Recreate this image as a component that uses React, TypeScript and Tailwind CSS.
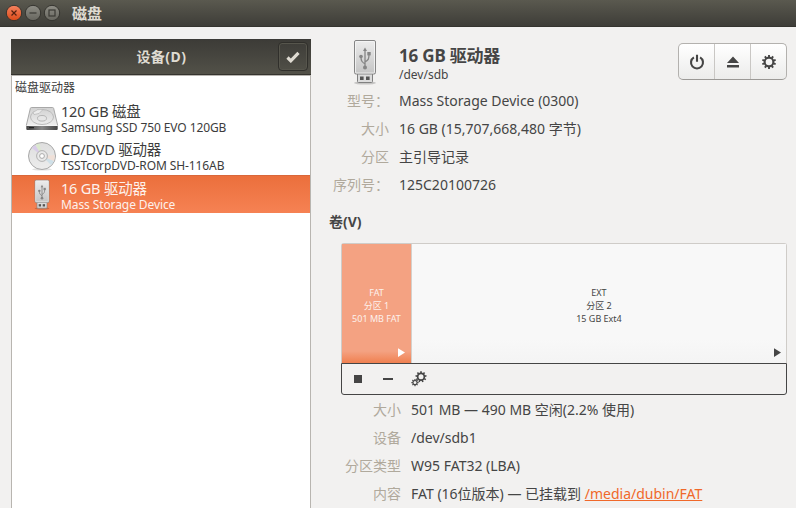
import React from "react";

const FONT = "font-['Noto_Sans','Noto_Sans_CJK_SC',sans-serif]";

function UsbIcon({ className }: { className: string }) {
  return (
    <svg viewBox="0 0 24 46" className={className} fill="none">
      <defs>
        <linearGradient id="usbBody" x1="0" y1="0" x2="0" y2="1">
          <stop offset="0" stopColor="#ececec" />
          <stop offset="1" stopColor="#c4c4c4" />
        </linearGradient>
      </defs>
      <ellipse cx="12" cy="44" rx="11" ry="1.6" fill="#000" opacity=".18" />
      <rect x="4.5" y="34" width="15" height="9.5" rx="1" fill="#dcdcdc" stroke="#808080" />
      <rect x="7" y="37.5" width="3.6" height="3.5" fill="#555" />
      <rect x="13" y="37.5" width="3.6" height="3.5" fill="#555" />
      <rect x="1.5" y="1.5" width="21" height="33.5" rx="1.5" fill="url(#usbBody)" stroke="#858585" />
      <rect x="2.5" y="2.5" width="19" height="31.5" rx="1" stroke="#f6f6f6" strokeOpacity=".8" />
      <g stroke="#858585" strokeWidth="1.3">
        <path d="M12 28V11M12 25C9 23 8 22 8 18M12 23C15.5 21 16 20 16 15" />
      </g>
      <path d="M12 8.5l2 3.5h-4z" fill="#858585" />
      <circle cx="12" cy="28.5" r="2" fill="#858585" />
      <circle cx="8" cy="17.5" r="1.8" fill="#858585" />
      <rect x="14.3" y="13" width="3.4" height="3.4" fill="#858585" />
    </svg>
  );
}

function DiskIcon() {
  return (
    <svg viewBox="0 0 34 26" className="h-[26px] w-[34px]" fill="none">
      <defs>
        <linearGradient id="diskTop" x1="0" y1="0" x2="0" y2="1">
          <stop offset="0" stopColor="#d2d2d2" />
          <stop offset="1" stopColor="#eeeeee" />
        </linearGradient>
        <linearGradient id="diskFront" x1="0" y1="0" x2="1" y2="0">
          <stop offset="0" stopColor="#444" />
          <stop offset=".5" stopColor="#888" />
          <stop offset="1" stopColor="#444" />
        </linearGradient>
      </defs>
      <path d="M1.3 20.5h31.4v3.6q0 .9-1 .9H2.3q-1 0-1-.9z" fill="url(#diskFront)" />
      <path d="M6.5 2.5h21q1 0 1.2 1l4 17H1.3l4-17q.2-1 1.2-1z" fill="url(#diskTop)" stroke="#a0a0a0" strokeWidth=".9" />
      <ellipse cx="17" cy="12" rx="11.5" ry="7.5" stroke="#b5b5b5" strokeWidth=".9" />
      <ellipse cx="17" cy="13.3" rx="4.5" ry="2.8" stroke="#b0b0b0" fill="#e6e6e6" strokeWidth=".9" />
      <path d="M8 7.5q4-4 10-3l-4 4-5 1z" fill="#ececec" stroke="#b5b5b5" strokeWidth=".7" />
      <path d="M1.5 20.5h31" stroke="#f4f4f4" />
      <rect x="4" y="22" width="5" height="1.3" fill="#222" />
    </svg>
  );
}

function DiscIcon() {
  return (
    <svg viewBox="0 0 30 30" className="h-[30px] w-[30px]" fill="none">
      <defs>
        <linearGradient id="discBody" x1="0" y1="0" x2="0" y2="1">
          <stop offset="0" stopColor="#dedede" />
          <stop offset="1" stopColor="#ececec" />
        </linearGradient>
      </defs>
      <ellipse cx="15" cy="28.3" rx="10" ry="1.2" fill="#000" opacity=".12" />
      <circle cx="15" cy="15" r="13.5" fill="url(#discBody)" stroke="#a8a8a8" />
      <path d="M15 15L5 7a12.8 12.8 0 0 1 3.5-3z" fill="#d8cce8" />
      <path d="M15 15L8.5 4a12.8 12.8 0 0 1 4-1.6z" fill="#dbe8cf" />
      <path d="M15 15l12 5a12.8 12.8 0 0 1-3 4z" fill="#cfe0e8" />
      <path d="M15 15l12.7-1a12.8 12.8 0 0 1-.7 6z" fill="#efe0d8" />
      <circle cx="15" cy="15" r="5.4" fill="#e9e9e9" stroke="#b2b2b2" />
      <circle cx="15" cy="15" r="2.4" fill="#fff" stroke="#aaa" />
    </svg>
  );
}

function Gear({ cx, cy, r, teeth, hole, tooth }: { cx: number; cy: number; r: number; teeth: number; hole: number; tooth: number }) {
  return (
    <g transform={`translate(${cx} ${cy})`}>
      <circle r={(r + hole) / 2} fill="none" stroke="#454545" strokeWidth={r - hole} />
      {Array.from({ length: teeth }, (_, i) => (
        <rect
          key={i}
          x={-tooth / 2}
          y={-r - tooth * 0.85}
          width={tooth}
          height={tooth * 1.2}
          fill="#454545"
          transform={`rotate(${(360 / teeth) * i})`}
        />
      ))}
    </g>
  );
}

function WindowButton({ kind }: { kind: "close" | "min" | "max" }) {
  const close = kind === "close";
  return (
    <svg viewBox="0 0 18 18" className="h-[18px] w-[18px]" fill="none">
      <defs>
        <linearGradient id={"wb" + kind} x1="0" y1="0" x2="0" y2="1">
          <stop offset="0" stopColor={close ? "#f58360" : "#8f8e86"} />
          <stop offset="1" stopColor={close ? "#dc4a18" : "#66655e"} />
        </linearGradient>
      </defs>
      <circle cx="9" cy="9" r="7.7" fill={`url(#wb${kind})`} stroke="#35342f" strokeWidth="1" />
      <g stroke={close ? "#54200f" : "#3b3a35"} strokeWidth="1.2">
        {close && <path d="M6.5 6.5l5 5M11.5 6.5l-5 5" />}
        {kind === "min" && <path d="M5.5 9h7" />}
        {kind === "max" && <rect x="6" y="6" width="6" height="6" />}
      </g>
    </svg>
  );
}

function DeviceRow({ icon, title, sub, titleTracking, subTracking, selected }: {
  icon: React.ReactNode; title: string; sub: string; titleTracking: string; subTracking: string; selected?: boolean;
}) {
  return (
    <div className={"flex h-[38px] " + (selected ? "border-t border-[#d9673a] bg-linear-to-b from-[#eb6f3c] to-[#f68253] text-[#fdf1ec]" : "text-[#3c3c3c]")}>
      <div className="flex w-[49px] items-center justify-center pl-[11px]">{icon}</div>
      <div className="flex flex-col whitespace-nowrap pt-1">
        <div className={"h-[17px] text-[14.5px] leading-[17px] " + titleTracking}>{title}</div>
        <div className={"h-4 text-[12px] leading-4 " + subTracking}>{sub}</div>
      </div>
    </div>
  );
}

function InfoRow({ label, labelWidth, children, tracking }: { label: string; labelWidth: string; children: React.ReactNode; tracking: string }) {
  return (
    <div className="flex h-7 items-center whitespace-nowrap text-[14px] leading-7">
      <div className={"shrink-0 text-right text-[#b0a99c] " + labelWidth}>{label}</div>
      <div className={"text-[#454545] " + tracking}>{children}</div>
    </div>
  );
}

export default function App() {
  return (
    <div className={"flex h-[508px] w-[796px] flex-col overflow-hidden bg-[#f2f1f0] text-[#454545] " + FONT}>
      <header className="flex h-[27px] shrink-0 items-center gap-px border-b border-[#35342f] bg-linear-to-b from-[#5a594f] to-[#3e3d38] pl-[5px]">
        <WindowButton kind="close" />
        <WindowButton kind="min" />
        <WindowButton kind="max" />
        <h1 className="ml-2.5 text-[15px] font-bold leading-none text-[#dfdbd2]">磁盘</h1>
      </header>

      <main className="flex min-h-0 flex-1">
        <aside className="ml-[11px] mt-3 flex w-[300px] shrink-0 flex-col">
          <div className="flex h-9 shrink-0 items-center border-b border-[#35342f] bg-linear-to-b from-[#3c3b37] to-[#525148]">
            <div className="flex-1 pl-[2px] text-center text-[14px] font-bold tracking-[0.5px] text-[#dfdbd2]">
              <span className="ml-[32px]">设备(D)</span>
            </div>
            <button className="mr-[3px] flex h-[29px] w-[30px] items-center justify-center rounded border border-[#302f2b] shadow-[inset_0_0_0_1px_#56554c]">
              <svg viewBox="0 0 14 12" className="h-3 w-3.5" fill="none">
                <path d="M1.5 6.5l3.3 3.3L12.5 1.8" stroke="#dfdbd2" strokeWidth="3.2" />
              </svg>
            </button>
          </div>
          <div className="flex-1 border-x border-t border-[#b8b5b0] bg-white">
            <div className="h-[23px] pl-[3px] text-[12px] leading-[23px] text-[#3c3c3c]">磁盘驱动器</div>
            <DeviceRow icon={<DiskIcon />} title="120 GB 磁盘" sub="Samsung SSD 750 EVO 120GB" titleTracking="tracking-[-0.2px]" subTracking="tracking-[-0.1px]" />
            <DeviceRow icon={<DiscIcon />} title="CD/DVD 驱动器" sub="TSSTcorpDVD-ROM SH-116AB" titleTracking="tracking-[-0.2px]" subTracking="tracking-[-0.1px]" />
            <DeviceRow icon={<UsbIcon className="h-[31px] w-4" />} title="16 GB 驱动器" sub="Mass Storage Device" titleTracking="tracking-[-0.2px]" subTracking="tracking-[-0.1px]" selected />
          </div>
        </aside>

        <section className="flex min-w-0 flex-1 flex-col pl-[18px] pr-[9px]">
          <div className="flex h-[60px] shrink-0 pt-3">
            <div className="w-[70px] shrink-0 pl-6">
              <UsbIcon className="h-[46px] w-6" />
            </div>
            <div className="flex-1 whitespace-nowrap pt-1.5">
              <h2 className="text-[17px] font-bold leading-[22px] tracking-[-0.2px]">16 GB 驱动器</h2>
              <p className="text-[12px] leading-4">/dev/sdb</p>
            </div>
            <div className="mt-1 flex h-[37px] w-[109px] divide-x divide-[#c9c7c4] rounded-[5px] border border-[#b3b1ae] border-b-[#9b9996] bg-linear-to-b from-white to-[#ececeb]">
              <button className="flex flex-1 items-center justify-center">
                <svg viewBox="0 0 16 16" className="h-4 w-4" fill="none" stroke="#454545" strokeWidth="2.1">
                  <path d="M4.9 3.3a6 6 0 1 0 6.2 0M8 .8v7" />
                </svg>
              </button>
              <button className="flex flex-1 items-center justify-center">
                <svg viewBox="0 0 14 12" className="h-3 w-3.5" fill="#454545">
                  <path d="M7 .5L13 7H1zM1 9h12v2.4H1z" />
                </svg>
              </button>
              <button className="flex flex-1 items-center justify-center">
                <svg viewBox="0 0 16 16" className="h-4 w-4">
                  <Gear cx={8} cy={8} r={5.4} hole={3.3} teeth={10} tooth={1.9} />
                </svg>
              </button>
            </div>
          </div>

          <div className="flex shrink-0 flex-col">
            <InfoRow label="型号：" labelWidth="w-[70px] pr-[10px]" tracking="">Mass Storage Device (0300)</InfoRow>
            <InfoRow label="大小" labelWidth="w-[70px] pr-[10px]" tracking="">16 GB (15,707,668,480 字节)</InfoRow>
            <InfoRow label="分区" labelWidth="w-[70px] pr-[10px]" tracking="">主引导记录</InfoRow>
            <InfoRow label="序列号：" labelWidth="w-[70px] pr-[10px]" tracking="">125C20100726</InfoRow>
          </div>

          <h3 className="mt-[9px] h-7 shrink-0 text-[14px] font-bold leading-7">卷(V)</h3>

          <div className="ml-3 mt-[7px] flex h-[120px] w-[446px] shrink-0 rounded-t-[3px] border border-b-0 border-[#cfccc8] text-center text-[9px] leading-[13px]">
            <div className="flex w-[70px] flex-col items-center justify-end border-r border-[#d5d0cb] bg-[linear-gradient(#f4a282_90%,#f08050)] text-[#fdf1ec]">
              <div>FAT</div>
              <div>分区 1</div>
              <div>501 MB FAT</div>
              <svg viewBox="0 0 8 10" className="mb-1.5 mr-1.5 mt-[23px] h-[9px] w-[7px] self-end" fill="#fff"><path d="M0 0l8 5-8 5z" /></svg>
            </div>
            <div className="flex flex-1 flex-col items-center justify-end bg-[linear-gradient(#f8f8f8_80%,#f4f4f4)]">
              <div>EXT</div>
              <div>分区 2</div>
              <div>15 GB Ext4</div>
              <svg viewBox="0 0 8 10" className="mb-1.5 mr-[5px] mt-[23px] h-[9px] w-[7px] self-end" fill="#454545"><path d="M0 0l8 5-8 5z" /></svg>
            </div>
          </div>
          <div className="ml-3 flex h-8 w-[446px] shrink-0 items-center rounded-b-[3px] border border-[#454545] pl-3">
            <span className="h-2 w-2 bg-[#454545]" />
            <span className="ml-[21px] h-0.5 w-2.5 bg-[#454545]" />
            <svg viewBox="0 0 16 16" className="ml-[18px] h-4 w-4">
              <Gear cx={10} cy={5.8} r={4.2} hole={2.5} teeth={9} tooth={1.6} />
              <Gear cx={4} cy={11.6} r={2.6} hole={1.5} teeth={8} tooth={1.2} />
            </svg>
          </div>

          <div className="mt-px flex shrink-0 flex-col">
            <InfoRow label="大小" labelWidth="w-[82px] pr-[10px]" tracking="">501 MB — 490 MB 空闲(2.2% 使用)</InfoRow>
            <InfoRow label="设备" labelWidth="w-[82px] pr-[10px]" tracking="">/dev/sdb1</InfoRow>
            <InfoRow label="分区类型" labelWidth="w-[82px] pr-[10px]" tracking="">W95 FAT32 (LBA)</InfoRow>
            <InfoRow label="内容" labelWidth="w-[82px] pr-[10px]" tracking="">
              FAT (16位版本) — <span>已挂载到 <a className="text-[#f0682a] underline">/media/dubin/FAT</a></span>
            </InfoRow>
          </div>
        </section>
      </main>
    </div>
  );
}
